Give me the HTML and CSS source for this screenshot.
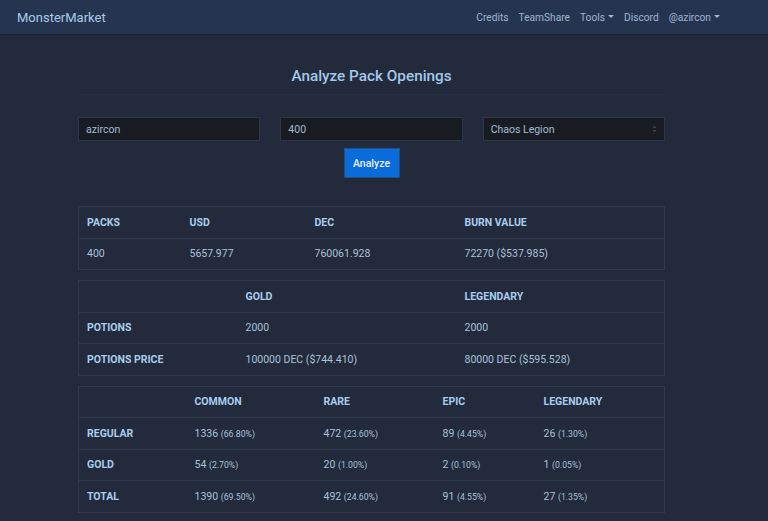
FILE: index.html
```html
<!DOCTYPE html>
<html>
<head>
<meta charset="utf-8">
<link rel="stylesheet" href="styles.css">
</head>
<body>
<nav class="navbar">
  <a class="brand">MonsterMarket</a>
  <ul class="nav">
    <li>Credits</li>
    <li>TeamShare</li>
    <li class="dd">Tools</li>
    <li>Discord</li>
    <li class="dd">@azircon</li>
  </ul>
</nav>
<main class="container">
  <h1 class="title">Analyze Pack Openings</h1>
  <hr class="rule">
  <form class="form">
    <div class="inputs">
      <div class="field">azircon</div>
      <div class="field">400</div>
      <div class="field select">Chaos Legion<span class="arrows"><svg width="5" height="8" viewBox="0 0 5 8"><path d="M2.5 0.5 L4.5 3 L0.5 3 Z M2.5 7.5 L4.5 5 L0.5 5 Z" fill="#3b4450"/></svg></span></div>
    </div>
    <button type="button" class="btn">Analyze</button>
  </form>

  <table class="tbl t1">
    <colgroup><col style="width:103px"><col style="width:125px"><col style="width:150px"><col></colgroup>
    <thead><tr><th>PACKS</th><th>USD</th><th>DEC</th><th>BURN VALUE</th></tr></thead>
    <tbody><tr><td>400</td><td>5657.977</td><td>760061.928</td><td>72270 ($537.985)</td></tr></tbody>
  </table>

  <table class="tbl t2">
    <colgroup><col style="width:159px"><col style="width:219px"><col></colgroup>
    <thead><tr><th></th><th>GOLD</th><th>LEGENDARY</th></tr></thead>
    <tbody>
      <tr><th>POTIONS</th><td>2000</td><td>2000</td></tr>
      <tr><th>POTIONS PRICE</th><td>100000 DEC ($744.410)</td><td>80000 DEC ($595.528)</td></tr>
    </tbody>
  </table>

  <table class="tbl t3">
    <colgroup><col style="width:108px"><col style="width:129px"><col style="width:119px"><col style="width:101px"><col></colgroup>
    <thead><tr><th></th><th>COMMON</th><th>RARE</th><th>EPIC</th><th>LEGENDARY</th></tr></thead>
    <tbody>
      <tr><th>REGULAR</th><td>1336 <small>(66.80%)</small></td><td>472 <small>(23.60%)</small></td><td>89 <small>(4.45%)</small></td><td>26 <small>(1.30%)</small></td></tr>
      <tr><th>GOLD</th><td>54 <small>(2.70%)</small></td><td>20 <small>(1.00%)</small></td><td>2 <small>(0.10%)</small></td><td>1 <small>(0.05%)</small></td></tr>
      <tr><th>TOTAL</th><td>1390 <small>(69.50%)</small></td><td>492 <small>(24.60%)</small></td><td>91 <small>(4.55%)</small></td><td>27 <small>(1.35%)</small></td></tr>
    </tbody>
  </table>
</main>
</body>
</html>
```

FILE: styles.css
```css
* { box-sizing: border-box; }
html, body {
  margin: 0;
  padding: 0;
  background: #222a3b;
  font-family: Roboto, "Liberation Sans", sans-serif;
  color: #a9c4de;
}
.navbar {
  height: 35px;
  background: #253550;
  border-bottom: 1px solid #1e2636;
  display: flex;
  align-items: center;
  justify-content: space-between;
  padding: 0 17px;
}
.brand {
  color: #a8cbe8;
  font-size: 13px;
}
.nav {
  list-style: none;
  margin: 0;
  padding: 0;
  display: flex;
  gap: 10px;
  font-size: 10.2px;
  color: #9fb6cf;
  margin-right: 31px;
}
.nav li { display: flex; align-items: center; }
.dd::after {
  content: "";
  display: inline-block;
  margin-left: 3px;
  border-left: 3px solid transparent;
  border-right: 3px solid transparent;
  border-top: 3px solid #9fb6cf;
  position: relative;
  top: -1px;
}
.container {
  width: 587px;
  margin-left: 78px;
}
.title {
  margin: 0;
  padding-top: 31px;
  text-align: center;
  font-size: 15.3px;
  font-weight: 500;
  color: #a3c8ea;
  line-height: 20px;
}
.rule {
  border: 0;
  border-top: 1px solid #273143;
  margin: 8px 0 0;
}
.form {
  margin-top: 22px;
  display: flex;
  flex-direction: column;
  align-items: center;
}
.inputs {
  width: 100%;
  display: grid;
  grid-template-columns: 1fr 1fr 1fr;
  gap: 20px;
}
.field {
  height: 24px;
  background: #181b21;
  border: 1px solid #2c3649;
  font-size: 10.5px;
  color: #a2bbd4;
  padding: 0 7px;
  display: flex;
  align-items: center;
}
.select { justify-content: space-between; }
.arrows { display: flex; }
.btn {
  margin-top: 7px;
  width: 56px;
  height: 30px;
  background: #0a6bdb;
  border: 1px solid #20507f;
  color: #e8f1fb;
  font-family: Roboto, "Liberation Sans", sans-serif;
  font-size: 10.5px;
  font-weight: 500;
  padding: 0;
}
.tbl {
  width: 100%;
  border-collapse: collapse;
  table-layout: fixed;
  border: 1px solid #2f3a4e;
  font-size: 10.5px;
  margin-top: 10px;
}
.t1 { margin-top: 28px; }
.tbl th, .tbl td {
  text-align: left;
  padding: 0 8px;
  height: 31.5px;
  border-top: 1px solid #2f3a4e;
  white-space: nowrap;
}
.tbl th {
  font-weight: 700;
  color: #a9cdef;
  font-size: 10.5px;
}
.tbl td { color: #a9c2da; }
.tbl small { font-size: 8.7px; }
```
